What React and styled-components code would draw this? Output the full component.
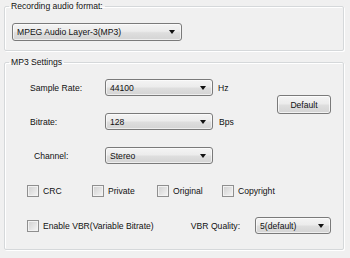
import React from 'react'
import styled, { createGlobalStyle } from 'styled-components'

const Global = createGlobalStyle`
  html, body {
    margin: 0;
    padding: 0;
    background: #f0f0f0;
  }
  body {
    font-family: "Liberation Sans", Arial, sans-serif;
    font-size: 8.6px;
    color: #111;
  }
`

const Page = styled.div`
  width: 350px;
  height: 258px;
  box-sizing: border-box;
  padding: 1px 0 0 4px;
  background: #f0f0f0;
  overflow: hidden;
`

const Group = styled.fieldset`
  box-sizing: border-box;
  width: 340px;
  margin: ${(p) => p.top || 0}px 0 0 0;
  padding: ${(p) => p.pad};
  border: 1px solid #d5d8da;
  border-radius: 2px;
  box-shadow: inset 1px 1px 0 #fff, 1px 1px 0 #fff;
  min-width: 0;
`

const Legend = styled.legend`
  padding: 0 2px;
  margin-left: -3px;
  line-height: 10px;
  height: 10px;
  white-space: nowrap;
`

const Combo = styled.div`
  box-sizing: border-box;
  width: ${(p) => p.w}px;
  height: ${(p) => p.h || 17}px;
  margin-left: ${(p) => p.ml || 0}px;
  border: 1px solid #7a7a7a;
  border-radius: 3px;
  background: linear-gradient(#f4f4f4 0%, #ececec 45%, #dedede 55%, #d4d4d4 100%);
  box-shadow: inset 0 0 0 1px rgba(255, 255, 255, 0.6);
  display: flex;
  align-items: center;
  justify-content: space-between;
  padding: 0 6px 0 4px;
  white-space: nowrap;
`

const Arrow = styled.span`
  width: 0;
  height: 0;
  border-left: 3.5px solid transparent;
  border-right: 3.5px solid transparent;
  border-top: 4px solid #111;
`

const SettingsGrid = styled.div`
  display: grid;
  grid-template-columns: 93px 108px 1fr 54px;
  grid-template-rows: 17px 17px 17px;
  row-gap: 17px;
  align-items: center;
`

const Label = styled.span`
  padding-left: ${(p) => p.indent || 0}px;
  white-space: nowrap;
`

const Unit = styled.span`
  padding-left: ${(p) => p.gap || 5}px;
`

const Button = styled.div`
  grid-column: 4;
  grid-row: 1 / span 2;
  box-sizing: border-box;
  height: 19px;
  border: 1px solid #7a7a7a;
  border-radius: 3px;
  background: linear-gradient(#f4f4f4 0%, #ececec 45%, #dedede 55%, #d4d4d4 100%);
  box-shadow: inset 0 0 0 1px rgba(255, 255, 255, 0.7);
  display: flex;
  align-items: center;
  justify-content: center;
`

const CheckRow = styled.div`
  display: grid;
  grid-template-columns: repeat(4, 65px);
  margin: 21px 0 0 15px;
`

const VbrRow = styled.div`
  display: flex;
  align-items: center;
  margin: 20px 0 0 15px;
`

const Check = styled.label`
  display: flex;
  align-items: center;
  gap: 4px;
  white-space: nowrap;
  width: ${(p) => (p.w ? p.w + 'px' : 'auto')};
`

const Box = styled.span`
  box-sizing: border-box;
  width: 12px;
  height: 12px;
  border: 1px solid #8f8f8f;
  background: linear-gradient(135deg, #cfcfcf 0%, #e6e6e6 60%, #f6f6f6 100%);
  box-shadow: inset 0 0 0 1px #f2f2f2;
`

const Cb = ({ children, w }) => (
  <Check w={w}>
    <Box />
    <span>{children}</span>
  </Check>
)

export default function App() {
  return (
    <Page>
      <Global />
      <Group pad="12px 7px 9px 7px">
        <Legend>Recording audio format:</Legend>
        <Combo w={170} h={18}>
          <span>MPEG Audio Layer-3(MP3)</span>
          <Arrow />
        </Combo>
      </Group>

      <Group top={6} pad="12px 12px 15px 7px">
        <Legend>MP3 Settings</Legend>
        <SettingsGrid>
          <Label indent={18}>Sample Rate:</Label>
          <Combo w={108}>
            <span>44100</span>
            <Arrow />
          </Combo>
          <Unit>Hz</Unit>
          <Button>Default</Button>

          <Label indent={18}>Bitrate:</Label>
          <Combo w={108}>
            <span>128</span>
            <Arrow />
          </Combo>
          <Unit gap={6}>Bps</Unit>

          <Label indent={22}>Channel:</Label>
          <Combo w={108}>
            <span>Stereo</span>
            <Arrow />
          </Combo>
        </SettingsGrid>

        <CheckRow>
          <Cb>CRC</Cb>
          <Cb>Private</Cb>
          <Cb>Original</Cb>
          <Cb>Copyright</Cb>
        </CheckRow>

        <VbrRow>
          <Cb w={164}>Enable VBR(Variable Bitrate)</Cb>
          <Label>VBR Quality:</Label>
          <Combo w={76} ml={15}>
            <span>5(default)</span>
            <Arrow />
          </Combo>
        </VbrRow>
      </Group>
    </Page>
  )
}
